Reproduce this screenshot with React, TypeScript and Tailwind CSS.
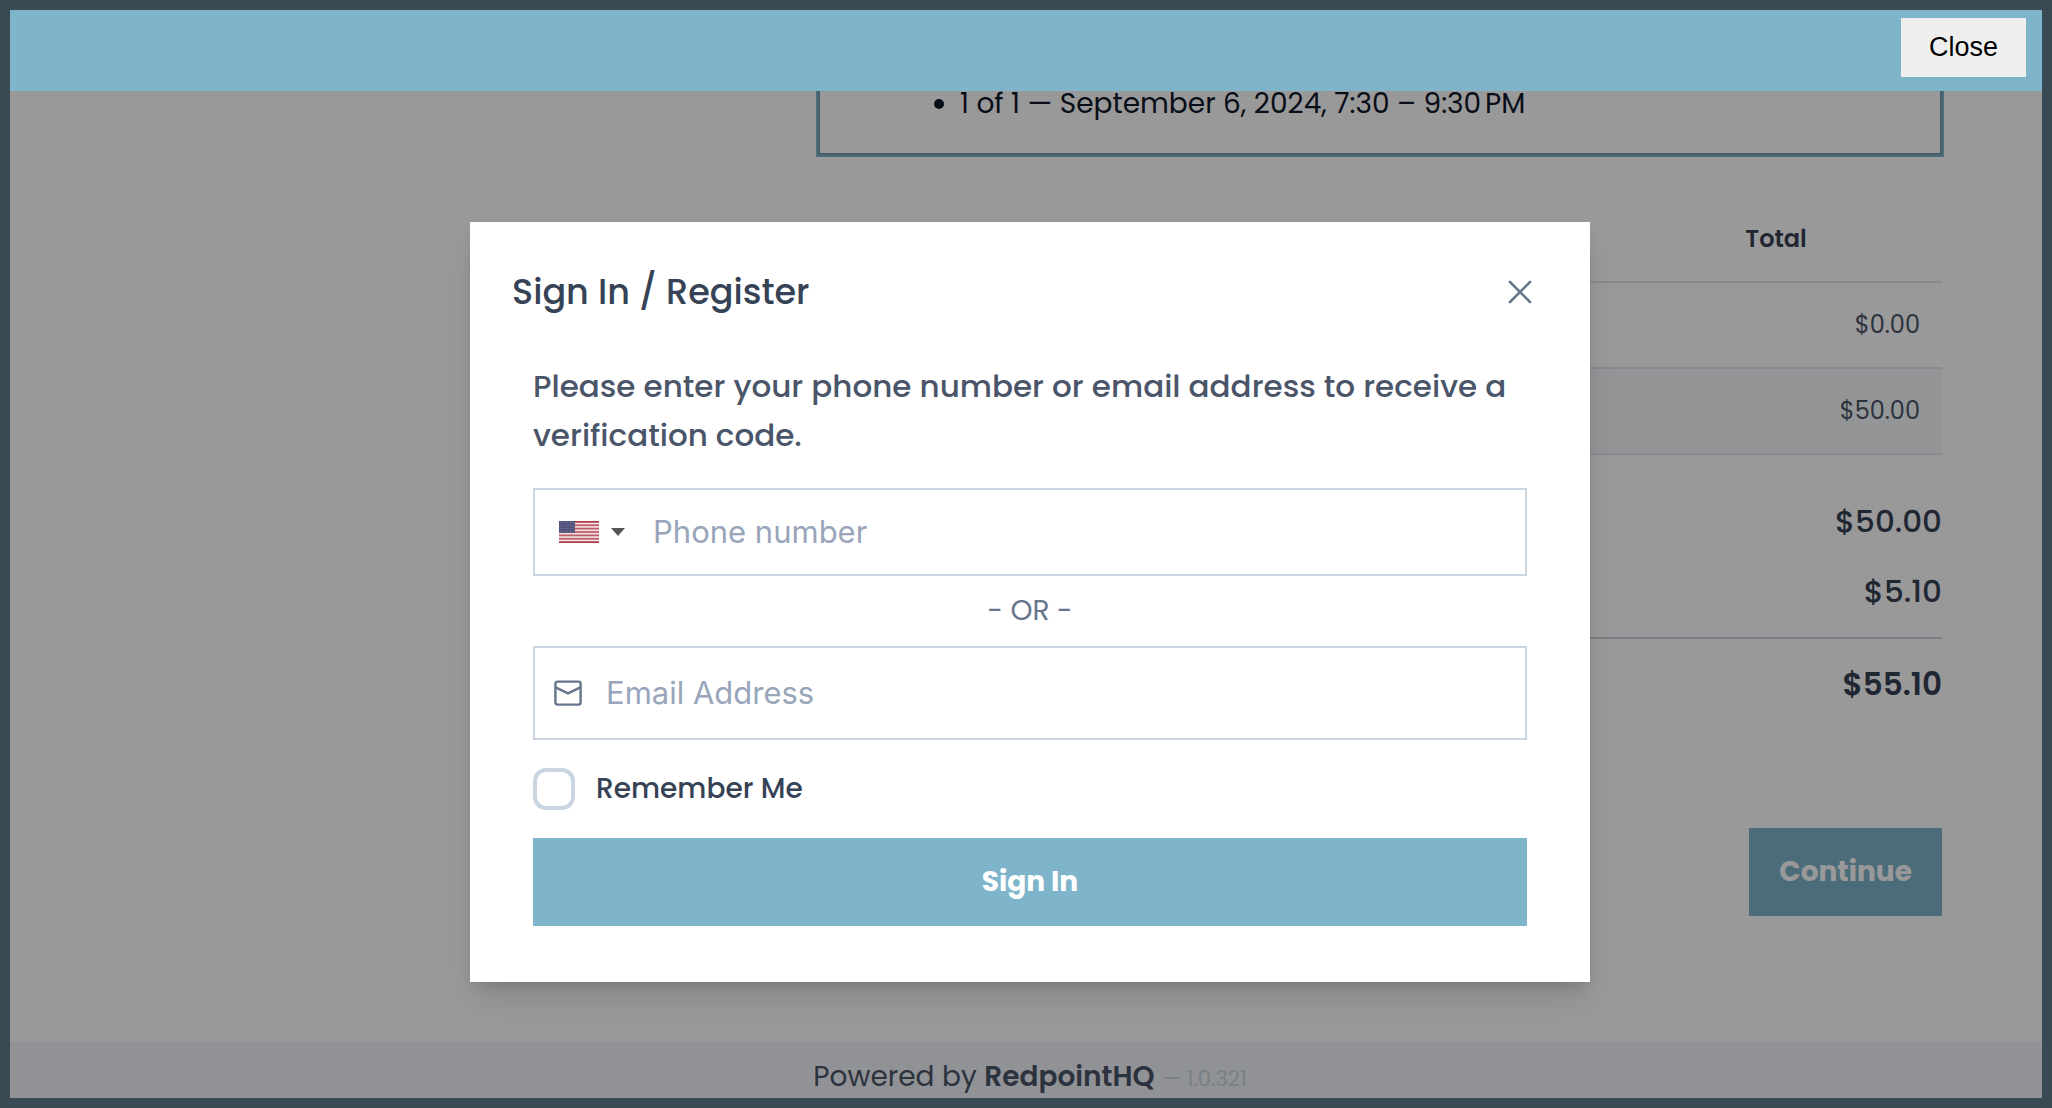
import React, { useState } from 'react';

const items = [
  { id: 1, total: '$0.00' },
  { id: 2, total: '$50.00' },
];

const XIcon = () => (
  <svg className="h-6 w-6" viewBox="0 0 24 24" fill="none" stroke="currentColor" strokeWidth="2.6" strokeLinecap="round">
    <path d="M2 2l20 20M22 2L2 22" />
  </svg>
);

const MailIcon = () => (
  <svg className="h-7 w-7 shrink-0" viewBox="0 0 28 28" fill="none" stroke="currentColor" strokeWidth="2.4" strokeLinejoin="round">
    <rect x="1.4" y="2.6" width="25.2" height="23" rx="2" />
    <path d="M1.6 8.4L14 14.4l12.4-6" />
  </svg>
);

const FlagUS = () => (
  <svg className="h-[22px] w-10" viewBox="0 0 40 22" preserveAspectRatio="none">
    <rect width="40" height="22" fill="#f3dfe2" />
    {[0, 1, 2, 3, 4, 5, 6].map(i => (
      <rect key={i} y={i * 3.385} width="40" height="1.692" fill={i === 0 || i === 6 ? '#a93a41' : '#bd5c68'} />
    ))}
    <rect width="16" height="11.85" fill="#53557f" />
    {[0, 1, 2, 3].map(r =>
      [0, 1, 2, 3, 4].map(c => (
        <circle key={`${r}-${c}`} cx={1.8 + c * 3.1} cy={1.6 + r * 2.9} r="0.5" fill="#7f80a8" />
      ))
    )}
  </svg>
);

const SignInModal = () => {
  const [phone, setPhone] = useState('');
  const [email, setEmail] = useState('');
  const [remember, setRemember] = useState(false);

  return (
    <div
      role="dialog"
      aria-labelledby="signin-title"
      className="w-full max-w-[1120px] bg-white shadow-[0_20px_30px_-6px_rgb(0_0_0/0.12),0_8px_12px_-4px_rgb(0_0_0/0.1)]"
    >
      <div className="flex h-[140px] items-center justify-between pl-[42px] pr-[58px]">
        <h2 id="signin-title" className="text-[35px] font-medium text-[#364255]">Sign In / Register</h2>
        <button type="button" aria-label="Close dialog" className="text-[#67758d]">
          <XIcon />
        </button>
      </div>

      <form className="flex flex-col px-[63px] pb-14" onSubmit={e => e.preventDefault()}>
        <p className="mb-7 text-[31px] leading-[49px] font-medium text-[#4a5569]">
          Please enter your phone number or email address to receive a verification code.
        </p>

        <div className="flex h-[88px] items-center border-2 border-slate-300 pl-6">
          <button type="button" aria-label="Country" className="flex items-center gap-3">
            <FlagUS />
            <span className="border-x-[7px] border-t-[8px] border-x-transparent border-t-[#555]" />
          </button>
          <input
            type="tel"
            aria-label="Phone number"
            placeholder="Phone number"
            value={phone}
            onChange={e => setPhone(e.target.value)}
            className="ml-7 min-w-0 flex-1 font-['Inter',sans-serif] text-[31px] text-slate-700 outline-none placeholder:text-[#98a5ba]"
          />
        </div>

        <div className="flex h-[70px] items-center justify-center text-[28px] text-[#67758d]">- OR -</div>

        <div className="flex h-[94px] items-center gap-6 border-2 border-slate-300 pl-[19px] text-[#67758d]">
          <MailIcon />
          <input
            type="email"
            aria-label="Email Address"
            placeholder="Email Address"
            value={email}
            onChange={e => setEmail(e.target.value)}
            className="min-w-0 flex-1 font-['Inter',sans-serif] text-[31px] text-slate-700 outline-none placeholder:text-[#98a5ba]"
          />
        </div>

        <label className="my-7 flex items-center gap-[21px] self-start text-[28px] leading-[42px] font-medium text-[#364255]">
          <input
            type="checkbox"
            checked={remember}
            onChange={e => setRemember(e.target.checked)}
            className="h-[42px] w-[42px] appearance-none rounded-[13px] border-4 border-slate-300 bg-white checked:bg-[#7fb5cb]"
          />
          Remember Me
        </label>

        <button type="submit" className="h-[88px] bg-[#7fb5cb] text-[28px] font-bold text-white">
          Sign In
        </button>
      </form>
    </div>
  );
};

const Checkout = () => (
  <div className="flex min-h-full flex-1 flex-col">
    <section className="flex flex-1 flex-col pr-[100px] pl-[808px]">
      <div className="border-x-2 border-b-2 border-[#739eb1] pb-9 pl-[140px] ring-2 ring-[#7fb5cb]">
        <ul className="list-disc text-[28px] leading-[26px] text-[#0f172a]">
          <li>{'1 of 1 — September 6, 2024, 7:30 – 9:30\u202fPM'}</li>
        </ul>
      </div>

      <table className="mt-[41px] w-full text-[24px] text-[#4a5569]">
        <thead>
          <tr className="h-[86px] border-b-2 border-slate-200">
            <th />
            <th className="w-[332px] text-center font-semibold text-[#364255]">Total</th>
          </tr>
        </thead>
        <tbody>
          {items.map(item => (
            <tr key={item.id} className="h-[86px] border-b-2 border-slate-200 even:bg-[#f6f9fb]">
              <td />
              <td className="pr-[22px] text-right">{item.total}</td>
            </tr>
          ))}
        </tbody>
      </table>

      <div className="mt-[31px] text-right text-[31px] leading-[70px] font-medium text-[#364255]">
        <div>$50.00</div>
        <div>$5.10</div>
        <div className="mt-[11px] border-t-2 border-slate-300 py-[10px] font-semibold">$55.10</div>
      </div>

      <button type="button" className="mt-[99px] h-[88px] self-end bg-[#7fb5cb] px-[30px] text-[28px] font-bold text-white">
        Continue
      </button>
    </section>

    <footer className="flex h-14 shrink-0 items-baseline justify-center gap-2 bg-[#f2f3f9] pt-3.5 pl-2 text-[28px] text-[#4a5569]">
      <span>
        Powered by <strong className="font-semibold">RedpointHQ</strong>
      </span>
      <span className="text-[21px] text-slate-300">— 1.0.321</span>
    </footer>
  </div>
);

const App = () => {
  return (
    <div className="flex h-screen flex-col bg-[#3a4a54] p-[10px] font-['Poppins','Inter',sans-serif]">
      <header className="flex h-[81px] shrink-0 items-start justify-end bg-[#7fb5cb] px-4 pt-2">
        <button type="button" className="h-[59px] bg-[#efefef] px-7 font-['Liberation_Sans',Arial,sans-serif] text-[27px] text-black">
          Close
        </button>
      </header>

      <main className="relative flex min-h-0 flex-1 flex-col overflow-hidden bg-white">
        <Checkout />
        <div className="absolute inset-0 flex items-start justify-center bg-black/40 pt-[131px] pl-2">
          <SignInModal />
        </div>
      </main>
    </div>
  );
};

export default App;
